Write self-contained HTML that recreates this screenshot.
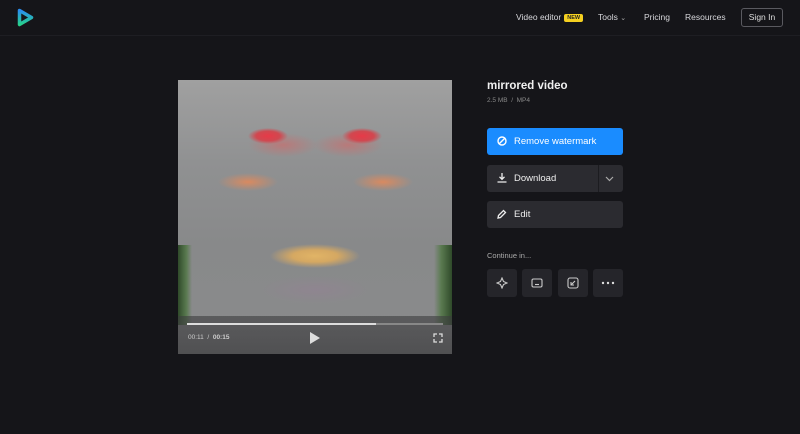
<!DOCTYPE html>
<html><head><meta charset="utf-8"><style>
*{margin:0;padding:0;box-sizing:border-box}
body{width:800px;height:434px;background:#151519;font-family:"Liberation Sans",sans-serif;color:#fff;position:relative;overflow:hidden}
.hdr{position:absolute;left:0;top:0;width:800px;height:36px;border-bottom:1px solid #1e1e23}
.nav{position:absolute;top:12px;font-size:8.5px;color:#d8d8dc}
.new{display:inline-block;background:#f5d020;color:#222;font-size:5.5px;font-weight:bold;padding:1px 3px;border-radius:2px;vertical-align:1px;margin-left:3px}
.sign{position:absolute;left:741px;top:8px;width:42px;height:19px;border:1px solid #5a5a60;border-radius:3px;font-size:8.5px;color:#ddd;text-align:center;line-height:17px}
.video{position:absolute;left:178px;top:80px;width:274px;height:274px;overflow:hidden;
background:
radial-gradient(ellipse 20px 8px at 90px 56px,#e63a48 0,#d04850 60%,transparent 100%),
radial-gradient(ellipse 20px 8px at 184px 56px,#e63a48 0,#d04850 60%,transparent 100%),
radial-gradient(ellipse 35px 12px at 105px 65px,rgba(200,110,110,.7) 0,transparent 100%),
radial-gradient(ellipse 35px 12px at 170px 65px,rgba(200,110,110,.7) 0,transparent 100%),
radial-gradient(ellipse 30px 9px at 70px 102px,#d98a60 0,transparent 100%),
radial-gradient(ellipse 30px 9px at 205px 102px,#d98a60 0,transparent 100%),
radial-gradient(ellipse 45px 12px at 137px 176px,#e1b466 0,#d5a862 50%,transparent 100%),
radial-gradient(ellipse 55px 14px at 137px 210px,#8f8590 0,transparent 100%),
linear-gradient(#a0a0a0 0,#909192 30%,#88898a 60%,#8a8b8c 100%)}
.leafl{position:absolute;left:0;top:165px;width:14px;height:80px;background:linear-gradient(90deg,#2f4a2a,#5a7a50 60%,transparent)}
.leafr{position:absolute;right:0;top:165px;width:18px;height:80px;background:linear-gradient(270deg,#2f4a2a,#5a7a50 60%,transparent)}
.ctrl{position:absolute;left:0;bottom:0;width:274px;height:38px;background:linear-gradient(rgba(60,60,62,.6),rgba(70,70,72,.85))}
.bar{position:absolute;left:9px;top:7px;width:256px;height:2px;background:#888}
.bar i{display:block;width:189px;height:2px;background:#ddd}
.time{position:absolute;left:10px;top:18px;font-size:6.5px;color:#ccc}
.h1{position:absolute;left:487px;top:80px;font-size:11.5px;font-weight:bold;color:#f0f0f0}
.meta{position:absolute;left:487px;top:97px;font-size:6.5px;color:#888}
.btn{position:absolute;left:487px;width:136px;height:27px;border-radius:3px;background:#2b2b30;font-size:9.5px;color:#eee;line-height:27px;padding-left:27px}
.btn svg{position:absolute;left:10px;top:8px}
.cont{position:absolute;left:487px;top:251px;font-size:7.5px;color:#aaa}
.sq{position:absolute;top:269px;width:30px;height:28px;border-radius:3px;background:#25252a}
.sq svg{position:absolute;left:9px;top:8px}
</style></head><body>
<div class="hdr">
<svg style="position:absolute;left:17px;top:8px" width="17" height="19" viewBox="0 0 17 19"><defs><linearGradient id="g" x1="0" y1="0" x2="0" y2="1"><stop offset="0" stop-color="#2a8ef0"/><stop offset="1" stop-color="#27d08c"/></linearGradient></defs><path d="M2.5 2.5 L14.5 9.5 L2.5 16.5 Z" fill="none" stroke="url(#g)" stroke-width="3.5" stroke-linejoin="round"/></svg>
<div class="nav" style="left:516px">Video editor<span class="new">NEW</span></div>
<div class="nav" style="left:598px">Tools <span style="font-size:7px;color:#aaa">&#8964;</span></div>
<div class="nav" style="left:644px">Pricing</div>
<div class="nav" style="left:685px">Resources</div>
<div class="sign">Sign In</div>
</div>
<div class="video"><div class="leafl"></div><div class="leafr"></div>
<div class="ctrl"><div class="bar"><i></i></div>
<div class="time">00:11 &nbsp;/&nbsp; <b>00:15</b></div>
<svg style="position:absolute;left:132px;top:16px" width="10" height="12"><path d="M0 0L10 6L0 12Z" fill="#ddd"/></svg>
<svg style="position:absolute;left:255px;top:17px" width="10" height="10" fill="none" stroke="#ddd" stroke-width="1.3"><path d="M1 4V1H4M6 1H9V4M9 6V9H6M4 9H1V6"/></svg>
</div></div>
<div class="h1">mirrored video</div>
<div class="meta">2.5 MB &nbsp;/&nbsp; MP4</div>
<div class="btn" style="top:128px;background:#1a8cff;color:#fff"><svg width="10" height="10" fill="none" stroke="#fff" stroke-width="1.4"><circle cx="5" cy="5" r="4"/><path d="M2.2 7.8L7.8 2.2"/></svg>Remove watermark</div>
<div class="btn" style="top:165px"><svg width="10" height="10" fill="none" stroke="#eee" stroke-width="1.3"><path d="M5 0V6M2.5 3.8L5 6.3L7.5 3.8M0.5 9H9.5"/></svg>Download
<div style="position:absolute;left:111px;top:0;width:1px;height:27px;background:#1c1c20"></div>
<svg style="left:118px;top:11px" width="9" height="6" fill="none" stroke="#aaa" stroke-width="1.2"><path d="M1 1L4.5 4.5L8 1"/></svg></div>
<div class="btn" style="top:201px"><svg width="10" height="10" fill="none" stroke="#eee" stroke-width="1.3"><path d="M1 9L1.5 6.5L6.5 1.5L8.5 3.5L3.5 8.5Z"/></svg>Edit</div>
<div class="cont">Continue in...</div>
<div class="sq" style="left:487px"><svg width="12" height="12" fill="none" stroke="#ccc" stroke-width="1.1"><path d="M6 1L7.5 4.5L11 6L7.5 7.5L6 11L4.5 7.5L1 6L4.5 4.5Z"/></svg></div>
<div class="sq" style="left:522px"><svg width="12" height="12" fill="none" stroke="#ccc" stroke-width="1.1"><rect x="1" y="2" width="10" height="8" rx="1.5"/><path d="M4 7.5H8"/></svg></div>
<div class="sq" style="left:558px"><svg width="12" height="12" fill="none" stroke="#ccc" stroke-width="1.1"><rect x="1" y="1" width="10" height="10" rx="2"/><path d="M4 8L8 4M4 5V8H7"/></svg></div>
<div class="sq" style="left:593px"><svg width="14" height="12" style="left:8px"><circle cx="2" cy="6" r="1.2" fill="#ddd"/><circle cx="7" cy="6" r="1.2" fill="#ddd"/><circle cx="12" cy="6" r="1.2" fill="#ddd"/></svg></div>
</body></html>
